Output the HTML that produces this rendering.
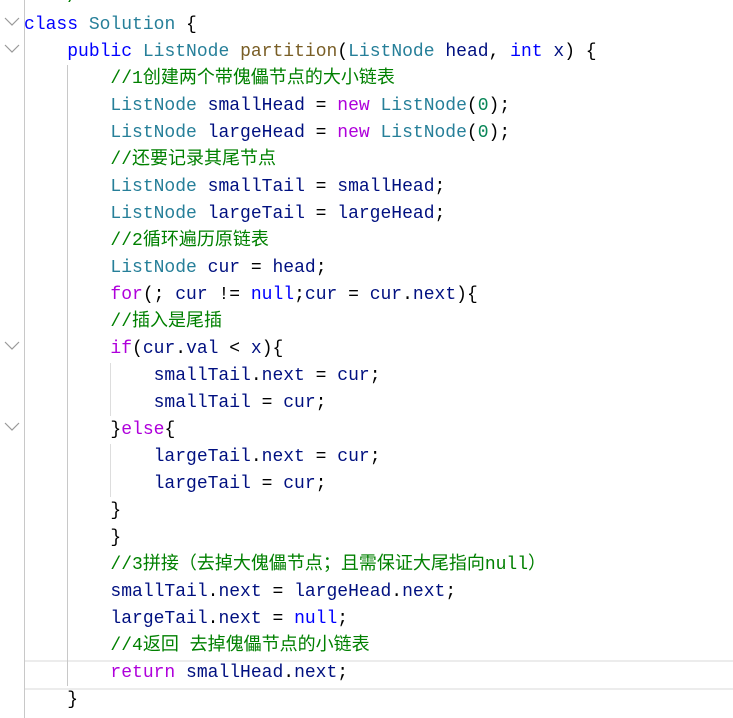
<!DOCTYPE html>
<html><head><meta charset="utf-8"><style>
body{margin:0;width:733px;height:718px;background:#fff;overflow:hidden;position:relative;font-family:"Liberation Mono","Noto Sans CJK SC",monospace;font-size:18px;}
.l{position:absolute;left:24px;height:27px;line-height:27px;white-space:pre;color:#000;}
.k{color:#0000ff}.t{color:#267f99}.m{color:#795e26}.c{color:#008000;font-family:"Liberation Mono","Noto Sans CJK SC",monospace}.v{color:#001080}.p{color:#af00db}.n{color:#098658}
.g{position:absolute;width:1px;background:#c8c8c8}
svg.ch{position:absolute;left:4px;width:16px;height:10px}
</style></head><body>
<div style="position:absolute;left:24px;right:0;top:660px;height:26px;border-top:2px solid #ececec;border-bottom:2px solid #ececec"></div>
<div class="g" style="left:24px;top:0;height:718px"></div>
<div class="g" style="left:67px;top:65px;height:621px"></div>
<div class="g" style="left:110px;top:363px;height:53px;background:#ddd"></div>
<div class="g" style="left:110px;top:444px;height:53px;background:#ddd"></div>
<svg class="ch" style="top:17px" viewBox="0 0 16 10"><path d="M1 1 L8 8 L15 1" fill="none" stroke="#999" stroke-width="1.2"/></svg>
<svg class="ch" style="top:44px" viewBox="0 0 16 10"><path d="M1 1 L8 8 L15 1" fill="none" stroke="#999" stroke-width="1.2"/></svg>
<svg class="ch" style="top:341px" viewBox="0 0 16 10"><path d="M1 1 L8 8 L15 1" fill="none" stroke="#999" stroke-width="1.2"/></svg>
<svg class="ch" style="top:422px" viewBox="0 0 16 10"><path d="M1 1 L8 8 L15 1" fill="none" stroke="#999" stroke-width="1.2"/></svg>
<div class="l" style="top:-15px">   <span style="color:#008000">*/</span></div>
<div class="l" style="top:12px"><span class="k">class</span> <span class="t">Solution</span> {</div>
<div class="l" style="top:39px">    <span class="k">public</span> <span class="t">ListNode</span> <span class="m">partition</span>(<span class="t">ListNode</span> <span class="v">head</span>, <span class="k">int</span> <span class="v">x</span>) {</div>
<div class="l" style="top:66px">        <span class="c">//1创建两个带傀儡节点的大小链表</span></div>
<div class="l" style="top:93px">        <span class="t">ListNode</span> <span class="v">smallHead</span> = <span class="p">new</span> <span class="t">ListNode</span>(<span class="n">0</span>);</div>
<div class="l" style="top:120px">        <span class="t">ListNode</span> <span class="v">largeHead</span> = <span class="p">new</span> <span class="t">ListNode</span>(<span class="n">0</span>);</div>
<div class="l" style="top:147px">        <span class="c">//还要记录其尾节点</span></div>
<div class="l" style="top:174px">        <span class="t">ListNode</span> <span class="v">smallTail</span> = <span class="v">smallHead</span>;</div>
<div class="l" style="top:201px">        <span class="t">ListNode</span> <span class="v">largeTail</span> = <span class="v">largeHead</span>;</div>
<div class="l" style="top:228px">        <span class="c">//2循环遍历原链表</span></div>
<div class="l" style="top:255px">        <span class="t">ListNode</span> <span class="v">cur</span> = <span class="v">head</span>;</div>
<div class="l" style="top:282px">        <span class="p">for</span>(; <span class="v">cur</span> != <span class="k">null</span>;<span class="v">cur</span> = <span class="v">cur</span>.<span class="v">next</span>){</div>
<div class="l" style="top:309px">        <span class="c">//插入是尾插</span></div>
<div class="l" style="top:336px">        <span class="p">if</span>(<span class="v">cur</span>.<span class="v">val</span> &lt; <span class="v">x</span>){</div>
<div class="l" style="top:363px">            <span class="v">smallTail</span>.<span class="v">next</span> = <span class="v">cur</span>;</div>
<div class="l" style="top:390px">            <span class="v">smallTail</span> = <span class="v">cur</span>;</div>
<div class="l" style="top:417px">        }<span class="p">else</span>{</div>
<div class="l" style="top:444px">            <span class="v">largeTail</span>.<span class="v">next</span> = <span class="v">cur</span>;</div>
<div class="l" style="top:471px">            <span class="v">largeTail</span> = <span class="v">cur</span>;</div>
<div class="l" style="top:498px">        }</div>
<div class="l" style="top:525px">        }</div>
<div class="l" style="top:552px">        <span class="c">//3拼接（去掉大傀儡节点；且需保证大尾指向null）</span></div>
<div class="l" style="top:579px">        <span class="v">smallTail</span>.<span class="v">next</span> = <span class="v">largeHead</span>.<span class="v">next</span>;</div>
<div class="l" style="top:606px">        <span class="v">largeTail</span>.<span class="v">next</span> = <span class="k">null</span>;</div>
<div class="l" style="top:633px">        <span class="c">//4返回 去掉傀儡节点的小链表</span></div>
<div class="l" style="top:660px">        <span class="p">return</span> <span class="v">smallHead</span>.<span class="v">next</span>;</div>
<div class="l" style="top:687px">    }</div>
</body></html>
